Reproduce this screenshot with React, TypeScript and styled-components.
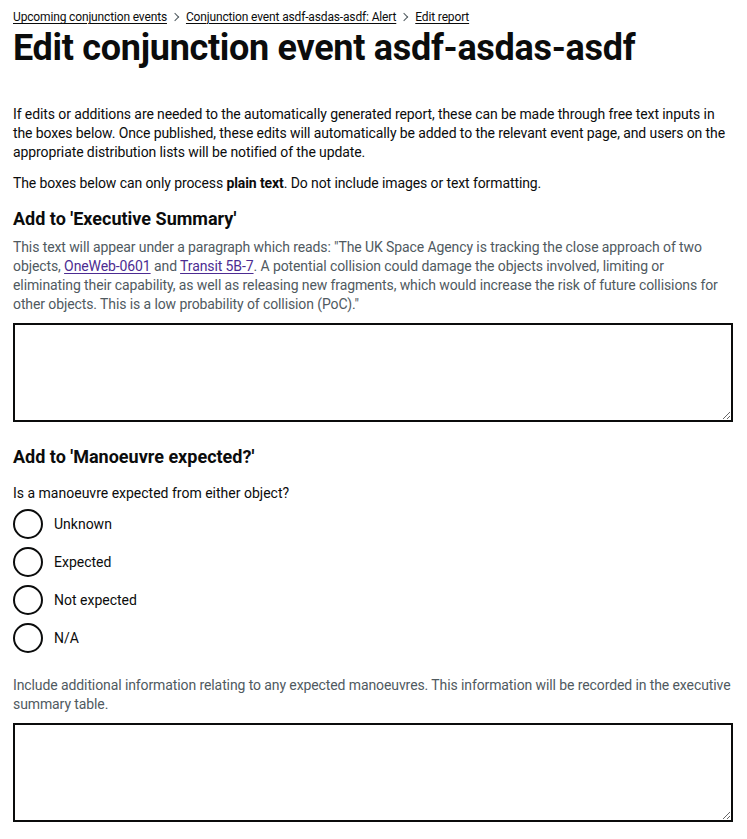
import React from "react";
import styled, { createGlobalStyle } from "styled-components";

const GlobalStyle = createGlobalStyle`
  html, body {
    margin: 0;
    padding: 0;
    background: #ffffff;
  }
  body {
    font-family: Roboto, "Liberation Sans", sans-serif;
    color: #0b0c0c;
    -webkit-font-smoothing: antialiased;
  }
`;

const Page = styled.main`
  padding: 8px 14px 0 13px;
  display: flex;
  flex-direction: column;
`;

const Breadcrumbs = styled.ol`
  list-style: none;
  margin: 0;
  padding: 0;
  display: flex;
  align-items: center;
  font-size: 12px;
  line-height: 18px;
  letter-spacing: -0.15px;
`;

const Crumb = styled.li`
  display: flex;
  align-items: center;
`;

const CrumbLink = styled.a`
  color: #0b0c0c;
  text-decoration: underline;
  text-underline-offset: 2px;
  text-decoration-thickness: 1px;
`;

const Chevron = styled.span`
  display: inline-block;
  width: 5px;
  height: 5px;
  margin: 0 8px 0 5px;
  border-top: 1px solid #505a5f;
  border-right: 1px solid #505a5f;
  transform: rotate(45deg);
`;

const Title = styled.h1`
  margin: 2px 0 0;
  font-size: 36px;
  line-height: 40px;
  font-weight: 700;
  letter-spacing: -0.3px;
`;

const Body = styled.p`
  margin: 37px 0 0;
  font-size: 14px;
  line-height: 19px;
  letter-spacing: -0.1px;

  & + & {
    margin-top: 12px;
  }

  strong {
    font-weight: 700;
  }
`;

const Section = styled.section<{ $gap: number }>`
  margin-top: ${(p) => p.$gap}px;
  display: flex;
  flex-direction: column;
`;

const Heading = styled.h2`
  margin: 0;
  font-size: 18px;
  line-height: 24px;
  font-weight: 700;
`;

const Hint = styled.p<{ $top: number }>`
  margin: ${(p) => p.$top}px 0 0;
  font-size: 14px;
  line-height: 19px;
  letter-spacing: -0.1px;
  color: #505a5f;
`;

const HintLink = styled.a`
  color: #4c2c92;
  text-decoration: underline;
  text-underline-offset: 2px;
`;

const Label = styled.p`
  margin: 15px 0 0;
  font-size: 14px;
  line-height: 19px;
`;

const TextArea = styled.textarea`
  box-sizing: border-box;
  display: block;
  width: 100%;
  height: 99px;
  margin-top: 9px;
  padding: 5px;
  border: 2px solid #0b0c0c;
  border-radius: 0;
  resize: vertical;
  font-family: inherit;
  font-size: 14px;
  background: #ffffff;
`;

const Radios = styled.div`
  display: flex;
  flex-direction: column;
  gap: 8px;
  margin-top: 6px;
`;

const RadioItem = styled.label`
  display: flex;
  align-items: center;
  gap: 11px;
  font-size: 14px;
  line-height: 19px;
  cursor: pointer;
`;

const RadioCircle = styled.span`
  box-sizing: border-box;
  width: 30px;
  height: 30px;
  border: 2px solid #0b0c0c;
  border-radius: 50%;
  flex-shrink: 0;
`;

const options = ["Unknown", "Expected", "Not expected", "N/A"];

export default function App() {
  return (
    <>
      <GlobalStyle />
      <Page>
        <nav>
          <Breadcrumbs>
            <Crumb>
              <CrumbLink href="#">Upcoming conjunction events</CrumbLink>
              <Chevron />
            </Crumb>
            <Crumb>
              <CrumbLink href="#">Conjunction event asdf-asdas-asdf: Alert</CrumbLink>
              <Chevron />
            </Crumb>
            <Crumb>
              <CrumbLink href="#">Edit report</CrumbLink>
            </Crumb>
          </Breadcrumbs>
        </nav>
        <Title>Edit conjunction event asdf-asdas-asdf</Title>

        <Body>
          If edits or additions are needed to the automatically generated report, these can be made
          through free text inputs in the boxes below. Once published, these edits will automatically
          be added to the relevant event page, and users on the appropriate distribution lists will be
          notified of the update.
        </Body>
        <Body>
          The boxes below can only process <strong>plain text</strong>. Do not include images or text
          formatting.
        </Body>

        <Section $gap={14}>
          <Heading>Add to 'Executive Summary'</Heading>
          <Hint $top={7}>
            This text will appear under a paragraph which reads: "The UK Space Agency is tracking the
            close approach of two objects, <HintLink href="#">OneWeb-0601</HintLink> and{" "}
            <HintLink href="#">Transit 5B-7</HintLink>. A potential collision could damage the objects
            involved, limiting or eliminating their capability, as well as releasing new fragments,
            which would increase the risk of future collisions for other objects. This is a low
            probability of collision (PoC)."
          </Hint>
          <TextArea aria-label="Executive Summary" />
        </Section>

        <Section $gap={23}>
          <Heading>Add to 'Manoeuvre expected?'</Heading>
          <Label>Is a manoeuvre expected from either object?</Label>
          <Radios>
            {options.map((o) => (
              <RadioItem key={o}>
                <RadioCircle />
                {o}
              </RadioItem>
            ))}
          </Radios>
          <Hint $top={23}>
            Include additional information relating to any expected manoeuvres. This information will
            be recorded in the executive summary table.
          </Hint>
          <TextArea aria-label="Manoeuvre information" />
        </Section>
      </Page>
    </>
  );
}
